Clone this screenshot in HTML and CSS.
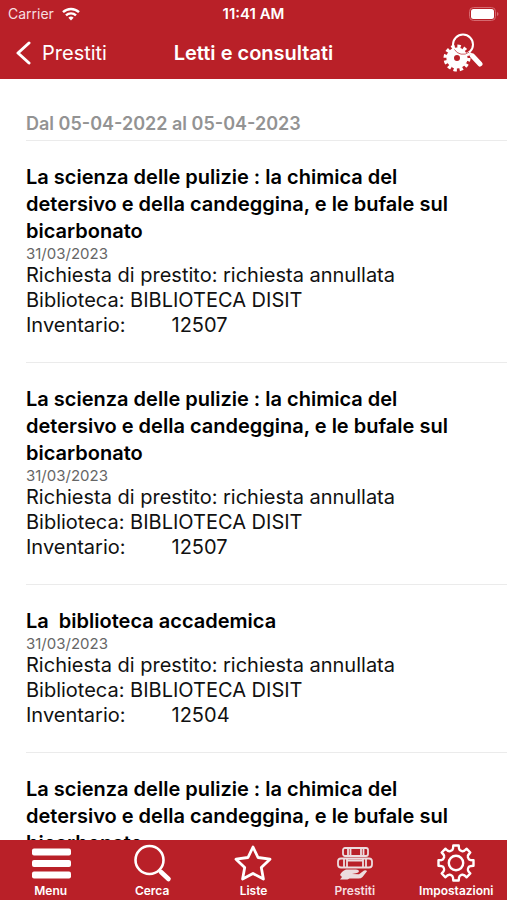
FILE: index.html
```
<!DOCTYPE html>
<html lang="it">
<head>
    <meta charset="UTF-8">
    <meta name="viewport" content="width=device-width, initial-scale=1.0">
    <title>Letti e consultati</title>
    <link rel="stylesheet" href="styles.css">
</head>
<body>
    <header class="top">
        <div class="status-bar">
            <div class="carrier">
                <span>Carrier</span>
                <svg width="18" height="14" viewBox="0 0 18 14" fill="none" stroke="#fff" stroke-width="2.4">
                    <path d="M1 5.2a11.5 11.5 0 0 1 16 0"/>
                    <path d="M4 8.4a7.2 7.2 0 0 1 10 0"/>
                    <path d="M6.4 10.8a3.8 3.8 0 0 1 5.2 0L9 13.6z" fill="#fff" stroke="none"/>
                </svg>
            </div>
            <span class="clock">11:41 AM</span>
            <svg class="battery" width="30" height="14" viewBox="0 0 30 14">
                <rect x="0.5" y="0.5" width="26" height="13" rx="4" fill="none" stroke="#d56a70"/>
                <rect x="2" y="2" width="23" height="10" rx="2.5" fill="#fff"/>
                <path d="M28 5v4q1.500-.6 1.500-2T28 5z" fill="#d56a70"/>
            </svg>
        </div>
        <div class="nav-bar">
            <a class="back" href="#">
                <svg width="16" height="24" viewBox="0 0 16 24" fill="none" stroke="#fff" stroke-width="3" stroke-linecap="round" stroke-linejoin="round">
                    <path d="M14 2L3 12l11 10"/>
                </svg>
                <span>Prestiti</span>
            </a>
            <h1>Letti e consultati</h1>
            <button class="filter" type="button" aria-label="Filtra">
                <svg width="40" height="40" viewBox="0 0 40 40" fill="none">
                    <circle cx="14" cy="25" r="6.8" stroke="#fff" stroke-width="7.6"/>
                    <circle cx="14" cy="25" r="11.8" stroke="#fff" stroke-width="3.4" stroke-dasharray="3.4 2.779"/>
                    <circle cx="20" cy="11.5" r="10" stroke="#fff" stroke-width="2"/>
                    <path d="M11.4 16.4a9.8 9.8 0 0 0 14.6 2.8" stroke="#b92028" stroke-width=".7"/>
                    <path d="M27 20l2 2" stroke="#fff" stroke-width="2"/>
                    <path d="M29.5 23l7.5 8" stroke="#fff" stroke-width="5" stroke-linecap="round"/>
                </svg>
            </button>
        </div>
    </header>

    <main class="loans">
        <h2 class="period">Dal 05-04-2022 al 05-04-2023</h2>

        <article class="loan">
            <h3>La scienza delle pulizie : la chimica del detersivo e della candeggina, e le bufale sul bicarbonato</h3>
            <time datetime="2023-03-31">31/03/2023</time>
            <p>Richiesta di prestito: richiesta annullata</p>
            <p>Biblioteca: BIBLIOTECA DISIT</p>
            <p class="inventory"><span>Inventario:</span><span>12507</span></p>
        </article>

        <article class="loan">
            <h3>La scienza delle pulizie : la chimica del detersivo e della candeggina, e le bufale sul bicarbonato</h3>
            <time datetime="2023-03-31">31/03/2023</time>
            <p>Richiesta di prestito: richiesta annullata</p>
            <p>Biblioteca: BIBLIOTECA DISIT</p>
            <p class="inventory"><span>Inventario:</span><span>12507</span></p>
        </article>

        <article class="loan">
            <h3>La&nbsp; biblioteca accademica</h3>
            <time datetime="2023-03-31">31/03/2023</time>
            <p>Richiesta di prestito: richiesta annullata</p>
            <p>Biblioteca: BIBLIOTECA DISIT</p>
            <p class="inventory"><span>Inventario:</span><span>12504</span></p>
        </article>

        <article class="loan">
            <h3>La scienza delle pulizie : la chimica del detersivo e della candeggina, e le bufale sul bicarbonato</h3>
        </article>
    </main>

    <nav class="tab-bar">
        <a href="#">
            <svg width="40" height="40" viewBox="0 0 40 40" fill="#fff">
                <rect x="1" y="5.5" width="39" height="7" rx="2"/>
                <rect x="1" y="17" width="39" height="7" rx="2"/>
                <rect x="1" y="28.5" width="39" height="7" rx="2"/>
            </svg>
            <span>Menu</span>
        </a>
        <a href="#">
            <svg width="40" height="40" viewBox="0 0 40 40" fill="none" stroke="#fff">
                <circle cx="17.500" cy="17" r="14" stroke-width="2.600"/>
                <path d="M27 27l2 2" stroke-width="3"/>
                <path d="M29 29l7.500 7" stroke-width="4.600" stroke-linecap="round"/>
            </svg>
            <span>Cerca</span>
        </a>
        <a href="#">
            <svg width="40" height="40" viewBox="0 0 40 40" fill="none" stroke="#fff" stroke-width="2.800" stroke-linejoin="round">
                <path d="M20 4l5 10.500 12 1.700-8.700 8.300 2.100 11.500L20 30.500 9.600 36l2.100-11.500L3 16.200l12-1.700z"/>
            </svg>
            <span>Liste</span>
        </a>
        <a class="active" href="#">
            <svg width="40" height="40" viewBox="0 0 40 40" fill="none" stroke="#ecdcde" stroke-width="1.800">
                <rect x="8" y="5" width="25" height="8" rx="2"/>
                <path d="M13 5v8M15.500 5v8M26 5v8M28.500 5v8"/>
                <rect x="3" y="15.500" width="34" height="9" rx="3"/>
                <path d="M9 15.500v9M12 15.500v9M28 15.500v9M31 15.500v9M12 17.500h16"/>
                <path d="M5 32q1.500-4 6-5.500h10q3 .3 3 1.800t-3 2l-4 .7 7 .2 5-3.700q2.500-.8 3 .8l-4.500 5.700q-1.500 1.500-4 1.500h-9l-2 1H5l2-2.500z" fill="#ecdcde" stroke="none"/>
            </svg>
            <span>Prestiti</span>
        </a>
        <a href="#">
            <svg width="40" height="40" viewBox="-20 -20 40 40" fill="none" stroke="#fff" stroke-width="2.400" stroke-linejoin="round">
                <path d="M13 -3.700Q14 -2.800 17.500 -2.700V2.700Q14 2.800 13 3.700Q11.500 6 11.800 6.600Q12 8.500 14.300 10.500L10.500 14.300Q8.500 12 6.600 11.800Q6 11.500 3.700 13Q2.800 14 2.700 17.500H-2.700Q-2.800 14 -3.700 13Q-6 11.500 -6.600 11.800Q-8.500 12 -10.500 14.300L-14.300 10.500Q-12 8.500 -11.800 6.600Q-11.500 6 -13 3.700Q-14 2.800 -17.500 2.700V-2.700Q-14 -2.800 -13 -3.700Q-11.500 -6 -11.800 -6.600Q-12 -8.500 -14.300 -10.500L-10.500 -14.300Q-8.500 -12 -6.600 -11.800Q-6 -11.500 -3.700 -13Q-2.800 -14 -2.700 -17.500H2.700Q2.800 -14 3.700 -13Q6 -11.500 6.600 -11.800Q8.500 -12 10.500 -14.300L14.300 -10.500Q12 -8.500 11.800 -6.600Q11.500 -6 13 -3.700z"/>
                <circle r="7.200"/>
            </svg>
            <span>Impostazioni</span>
        </a>
    </nav>
</body>
</html>
```
FILE: styles.css
```
* {
    box-sizing: border-box;
}

body {
    display: flex;
    flex-direction: column;
    height: 100vh;
    margin: 0;
    background: #fff;
    color: #111;
    font-family: Inter, "Liberation Sans", sans-serif;
    font-size: 20px;
}

h1, h2, h3, p {
    margin: 0;
}

a {
    color: inherit;
    text-decoration: none;
}

svg {
    display: block;
}

.top {
    flex: none;
    background: #b92028;
    color: #fff;
}

.status-bar, .nav-bar {
    display: grid;
    grid-template-columns: 1fr auto 1fr;
    align-items: center;
}

.status-bar {
    height: 27px;
    padding: 0 8px;
    font-size: 14px;
}

.carrier {
    display: flex;
    align-items: center;
    gap: 8px;
    color: #f6dfe0;
}

.clock {
    font-size: 15px;
    font-weight: 600;
}

.battery, .filter {
    justify-self: end;
}

.nav-bar {
    height: 52px;
    padding: 0 15px;
}

.back {
    display: flex;
    align-items: center;
    gap: 11px;
}

.nav-bar h1 {
    font-size: 20px;
    font-weight: 600;
}

.filter {
    margin-right: 9px;
    padding: 0;
    border: none;
    background: none;
    cursor: pointer;
}

.loans {
    flex: 1;
    min-height: 0;
    overflow: hidden;
    padding-left: 26px;
}

.period {
    padding: 33px 0 4px;
    border-bottom: 1px solid #ebebeb;
    color: #939393;
    font-size: 18px;
    font-weight: 600;
    line-height: 24px;
}

.loan {
    padding: 23px 50px 24px 0;
    border-bottom: 1px solid #ebebeb;
}

.loan h3 {
    color: #000;
    font-size: 20px;
    font-weight: 600;
    line-height: 27px;
}

.loan time {
    display: block;
    color: #666;
    font-size: 15px;
    line-height: 18px;
}

.loan p {
    line-height: 25px;
}

.inventory {
    display: flex;
    gap: 46px;
}

.tab-bar {
    display: grid;
    grid-template-columns: repeat(5, 1fr);
    flex: none;
    height: 60px;
    padding-top: 3px;
    background: #b92028;
    color: #fff;
    font-size: 12px;
    font-weight: 600;
    line-height: 15px;
}

.tab-bar a {
    display: flex;
    flex-direction: column;
    align-items: center;
}

.tab-bar .active {
    color: #f6dfe0;
}
```
